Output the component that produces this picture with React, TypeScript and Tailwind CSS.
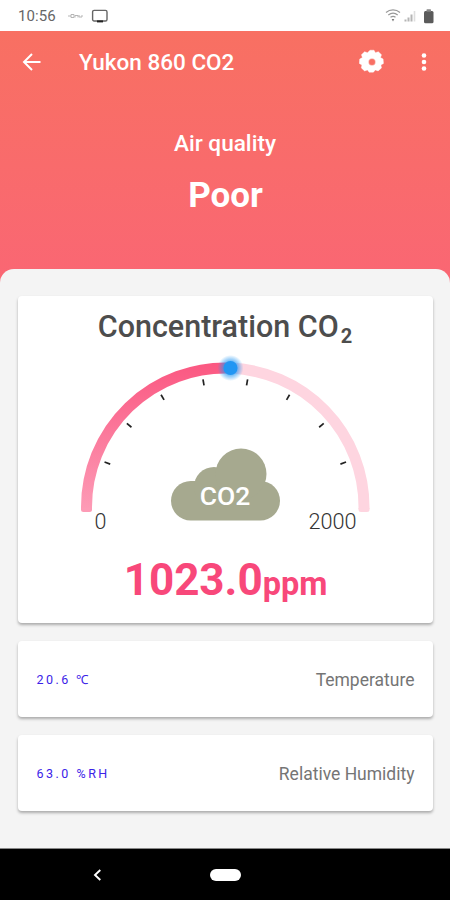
import React from "react";

const TICK_ANGLES = [-70, -50, -30, -10, 10, 30, 50, 70];

function StatusBar() {
  return (
    <div className="flex h-[31px] shrink-0 items-center bg-white pl-[18px] pr-[15px] pt-px text-[#666]">
      <span className="w-[38px] pt-px text-[15px] leading-none tracking-[0.1px]">10:56</span>
      <svg className="ml-[11px]" width="16" height="6" viewBox="0 0 16 6" fill="none" stroke="#b5b5b5" strokeWidth="1">
        <path d="M1 3h3M4 1.500h3v3H4zM8 4.500v-2h3v2M12 2v2h3V2" />
      </svg>
      <svg className="ml-[8px]" width="18" height="15" viewBox="0 0 18 15" fill="none">
        <rect x="1.600" y="1.400" width="14.400" height="10.600" rx="1.500" stroke="#666" strokeWidth="1.400" />
        <path d="M6 12.400h6" stroke="#222" strokeWidth="2" />
      </svg>
      <svg className="ml-auto" width="50" height="16" viewBox="0 0 50 16" fill="none">
        <path d="M1 4.500c4-3.400 10-3.400 14 0M3.300 7c3-2.300 6.600-2.300 9.400 0M5.500 9.300c1.600-1.200 3.600-1.200 5 0" stroke="#999" strokeWidth="1.200" />
        <path d="M6.700 11h2.600L8 13.500z" fill="#777" />
        <path d="M20.500 13.500v-2M23.500 13.500V9.500M26.500 13.500V6.500" stroke="#b5b5b5" strokeWidth="2" />
        <path d="M29.500 13.500V3" stroke="#dedede" strokeWidth="1.600" />
        <rect x="39" y="3" width="9.500" height="12.200" rx="1.500" fill="#5b5b5b" />
        <rect x="41.500" y="1.300" width="4.500" height="2.500" rx="0.600" fill="#888" />
      </svg>
    </div>
  );
}

function Header() {
  return (
    <header className="h-[260px] shrink-0 bg-linear-to-b from-[#f87062] to-[#fa6674] text-white">
      <div className="flex h-[62px] items-center pl-[20px] pr-[20px]">
        <svg width="24" height="24" viewBox="0 0 24 24" fill="none" stroke="white" strokeWidth="2">
          <path d="M20.500 12H4M12 4l-8 8 8 8" />
        </svg>
        <h1 className="ml-[35px] pt-px text-[22.500px] font-medium leading-none">Yukon 860 CO2</h1>
        <svg className="ml-auto" width="26" height="26" viewBox="-13 -13 26 26">
          <path
            fillRule="evenodd"
            fill="white"
            stroke="white"
            strokeWidth="0.400"
            strokeLinejoin="round"
            d="M-2-11.800h4l1.400 2.500 2.900-1 3.200 3-1 2.900 2.600 1.400.4 4.400-2.600 1.600.6 2.900-3.400 3-2.800-1-1.900 2.300h-4.200l-1.700-2.300-2.900 1-3.300-3 .6-2.900-2.600-1.600.4-4.400 2.700-1.400-1-2.900 3.200-3 2.900 1zM0-3.500a3.500 3.500 0 1 0 0 7a3.500 3.500 0 1 0 0-7z"
          />
        </svg>
        <svg className="ml-[33px]" width="12" height="24" viewBox="0 0 12 24" fill="white">
          <circle cx="6" cy="5.500" r="2.300" />
          <circle cx="6" cy="12" r="2.300" />
          <circle cx="6" cy="18.500" r="2.300" />
        </svg>
      </div>
      <div className="flex flex-col items-center pt-[39px]">
        <p className="text-[22.600px] font-medium leading-[24px]">Air quality</p>
        <p className="mt-[20px] pl-px text-[35px] font-bold leading-[40px]">Poor</p>
      </div>
    </header>
  );
}

function Gauge() {
  return (
    <svg className="block" width="415" height="190" viewBox="18 350 415 190" fill="none">
      <defs>
        <linearGradient id="progress" x1="0" y1="510" x2="0" y2="362" gradientUnits="userSpaceOnUse">
          <stop offset="0" stopColor="#fd9bb6" />
          <stop offset="0.500" stopColor="#fb7a9c" />
          <stop offset="1" stopColor="#fb5781" />
        </linearGradient>
        <radialGradient id="halo">
          <stop offset="0.450" stopColor="#2196f3" stopOpacity="0.750" />
          <stop offset="1" stopColor="#2196f3" stopOpacity="0" />
        </radialGradient>
      </defs>
      <path d="M230 368.100A139 139 0 0 1 364 507v2" stroke="#fed5e0" strokeWidth="11" />
      <path d="M358.500 508h11v1.500a2.500 2.500 0 0 1-2.500 2.500h-6a2.500 2.500 0 0 1-2.500-2.500z" fill="#fed5e0" />
      <path d="M86.500 509V507A139 139 0 0 1 230 368.100" stroke="url(#progress)" strokeWidth="11" />
      <path d="M81 508h11v1.500a2.500 2.500 0 0 1-2.500 2.500h-6a2.500 2.500 0 0 1-2.500-2.500z" fill="#fd9bb6" />
      {TICK_ANGLES.map((angle) => (
        <path key={angle} d="M225.300 377.500v6" stroke="#222" strokeWidth="1.700" transform={`rotate(${angle} 225.300 506)`} />
      ))}
      <circle cx="230.500" cy="368" r="13" fill="url(#halo)" />
      <circle cx="230.500" cy="368" r="7" fill="#2196f3" />
      <g fill="#a6a98f">
        <rect x="171" y="481" width="109" height="39.500" rx="19.750" />
        <circle cx="214" cy="487" r="20" />
        <circle cx="241" cy="474" r="25.500" />
      </g>
      <text x="225" y="505" textAnchor="middle" fontSize="26.500" fontWeight="500" fill="white">CO2</text>
      <text x="94.500" y="529" fontSize="21.500" fontWeight="300" fill="#333">0</text>
      <text x="356.500" y="529" textAnchor="end" fontSize="21.700" fontWeight="300" fill="#333">2000</text>
    </svg>
  );
}

function ReadingCard({ value, label }: { value: string; label: string }) {
  return (
    <section className="flex h-[76px] items-center justify-between rounded-[4px] bg-white px-[18px] pt-[3px] shadow-[0_2px_3px_rgba(0,0,0,0.3)]">
      <span className="pl-px text-[12.500px] tracking-[2.500px] text-[#3b23e8]">{value}</span>
      <span className="text-[17.500px] text-[#757575]">{label}</span>
    </section>
  );
}

export default function App() {
  return (
    <div className="flex h-[900px] w-[450px] flex-col overflow-hidden bg-white font-[Roboto,sans-serif]">
      <StatusBar />
      <Header />
      <main className="-mt-[22px] flex grow flex-col gap-[18px] rounded-t-[14px] bg-[#f4f4f4] px-[17.500px] pt-[27px]">
        <section className="h-[327px] shrink-0 rounded-[4px] bg-white shadow-[0_2px_3px_rgba(0,0,0,0.3)]">
          <h2 className="flex h-[54px] items-center justify-center pt-[9px] text-[30.500px] font-medium leading-none text-[#4d4d4d]">
            <span>Concentration CO</span>
            <span className="pl-[2px] pt-[17px] text-[20px] font-bold">2</span>
          </h2>
          <Gauge />
          <p className="mt-[18px] pl-px text-center text-[44px] font-bold leading-[44px] text-[#f8487a]">
            1023.0<span className="text-[32.500px]">ppm</span>
          </p>
        </section>
        <ReadingCard value="20.6 ℃" label="Temperature" />
        <ReadingCard value="63.0 %RH" label="Relative Humidity" />
      </main>
      <nav className="flex h-[52px] shrink-0 items-center border-t border-[#888] bg-black pl-[92px]">
        <svg width="10" height="12" viewBox="0 0 10 12" fill="none" stroke="white" strokeWidth="1.900">
          <path d="M8.300 1L3 6l5.300 5" />
        </svg>
        <span className="ml-[108px] h-[12px] w-[31px] rounded-full bg-white" />
      </nav>
    </div>
  );
}
